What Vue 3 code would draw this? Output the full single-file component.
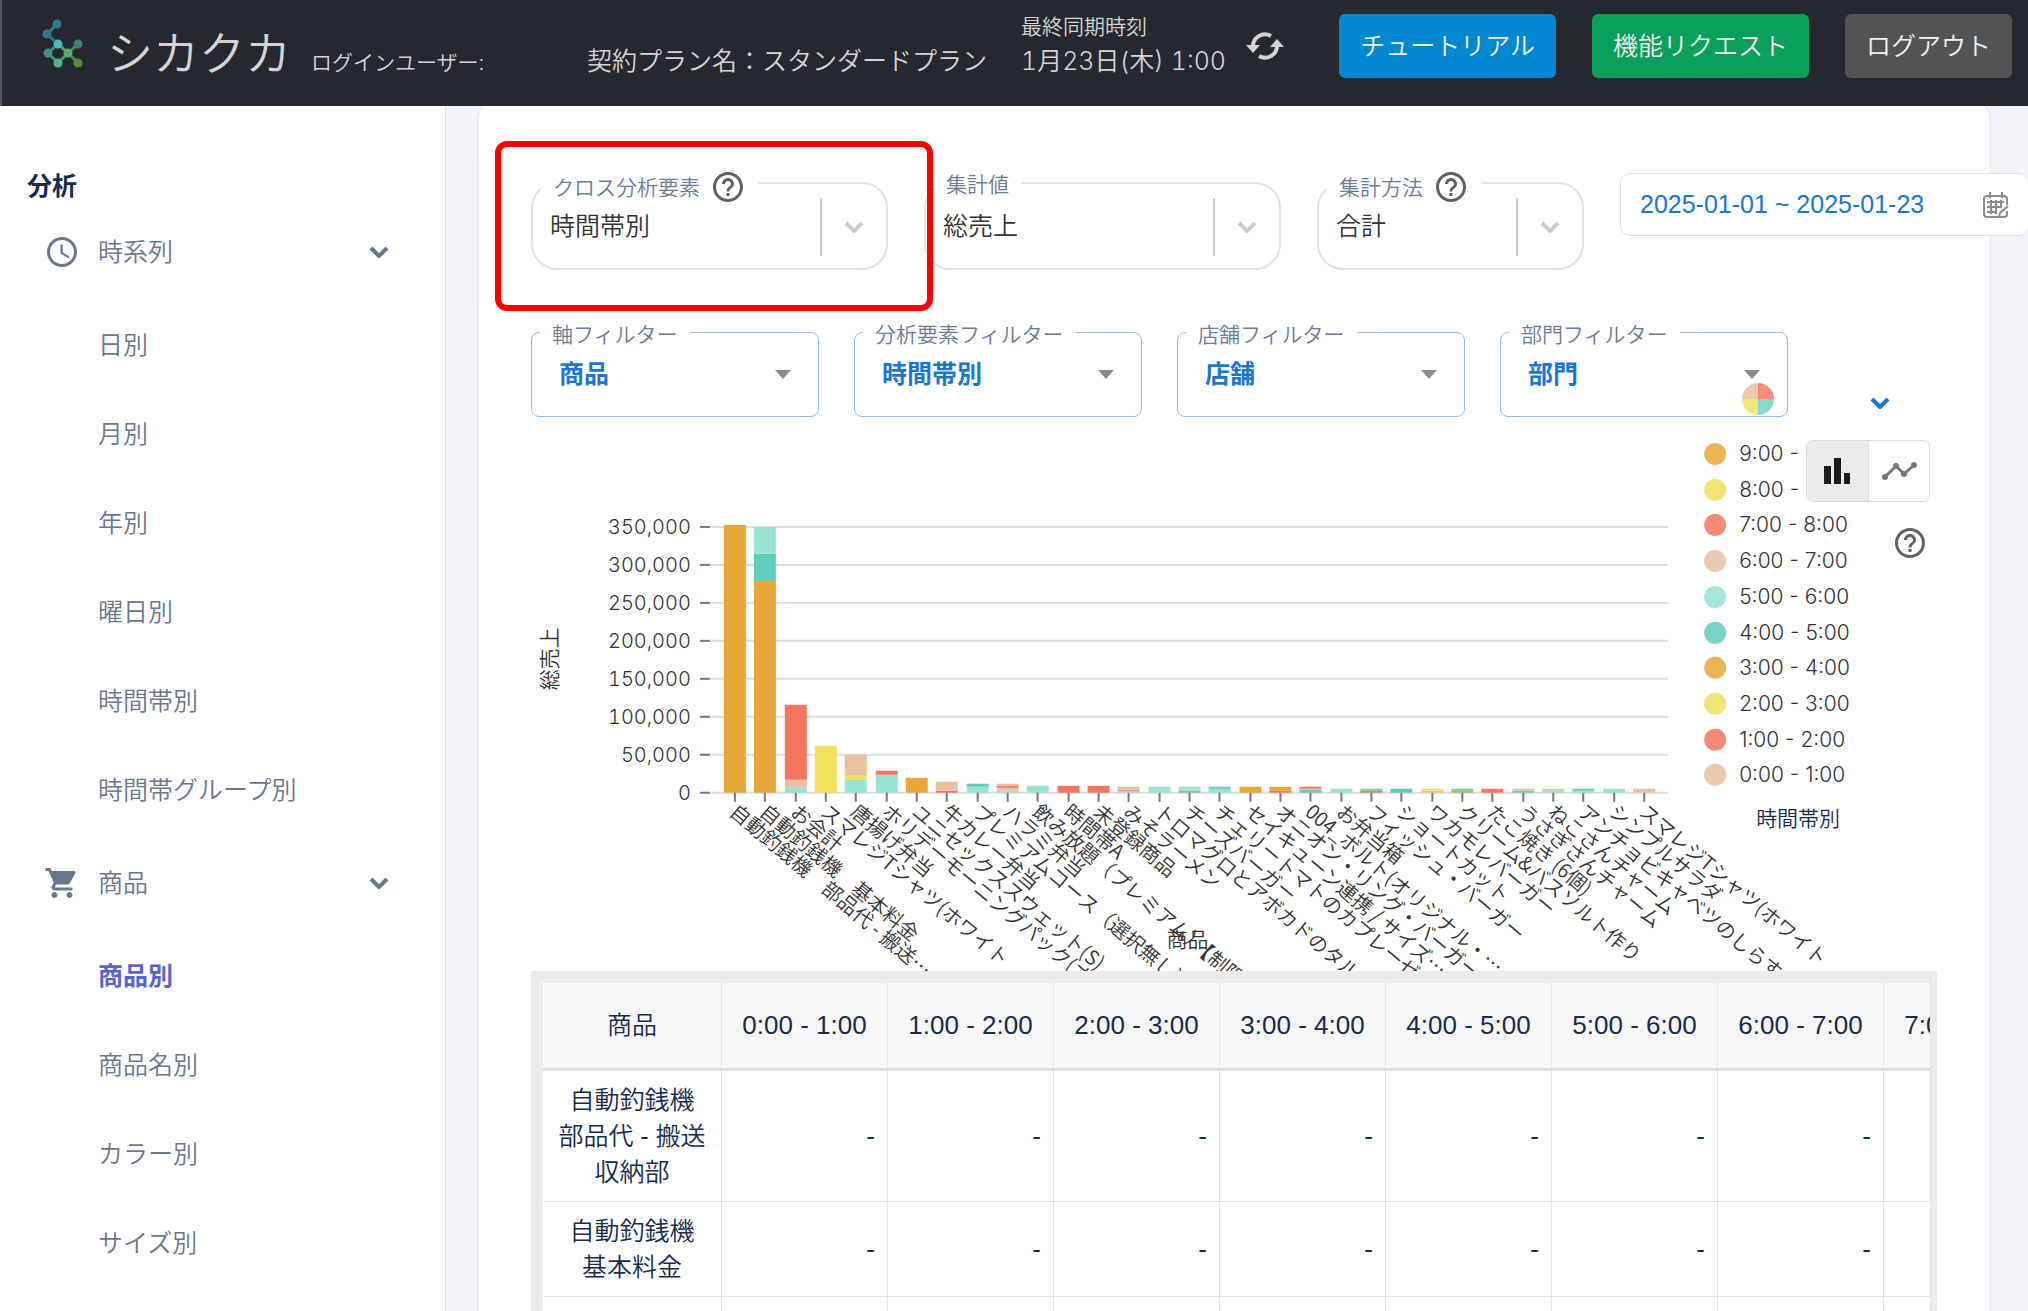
<script setup>
import { ref } from 'vue'

const navGroups = [
  {
    label: '時系列',
    icon: 'clock',
    items: ['日別', '月別', '年別', '曜日別', '時間帯別', '時間帯グループ別'],
  },
  { label: '商品', icon: 'cart', items: ['商品別', '商品名別', 'カラー別', 'サイズ別'] },
]
const activeItem = '商品別'

const selects = [
  { id: 'cross', label: 'クロス分析要素', value: '時間帯別', help: true, size: 'wide' },
  { id: 'metric', label: '集計値', value: '総売上', help: false, size: 'wide' },
  { id: 'method', label: '集計方法', value: '合計', help: true, size: 'narrow' },
]
const filters = [
  { id: 'axis', label: '軸フィルター', value: '商品' },
  { id: 'element', label: '分析要素フィルター', value: '時間帯別' },
  { id: 'store', label: '店舗フィルター', value: '店舗' },
  { id: 'section', label: '部門フィルター', value: '部門' },
]
const period = ref('2025-01-01 ~ 2025-01-23')

const colors = {
  tan: '#e8c1a0',
  red: '#f47560',
  yellow: '#f1e15b',
  orange: '#e8a838',
  teal: '#61cdbb',
  mint: '#97e3d5',
}

const yTicks = [0, 50000, 100000, 150000, 200000, 250000, 300000, 350000].map((v) => ({
  text: v.toLocaleString('en-US'),
  y: Math.round(362 - (v / 50000) * 38),
}))

// Each product: axis label followed by its stacked segments, bottom to top, in chart units.
const products = [
  ['自動釣銭機　部品代 - 搬送…', [['orange', 268]]],
  ['自動釣銭機　基本料金', [['orange', 212], ['teal', 27], ['mint', 27]]],
  ['お会計', [['mint', 5], ['tan', 8], ['red', 75]]],
  ['スマレジTシャツ(ホワイト', [['yellow', 47]]],
  ['唐揚げ弁当', [['mint', 13], ['yellow', 4], ['tan', 21]]],
  ['ホリデーモーニングパック(オ…', [['mint', 18], ['red', 4]]],
  ['ユニセックススウェット(S)', [['orange', 15]]],
  ['牛カレー弁当', [['red', 2], ['tan', 9]]],
  ['プレミアムコース（選択無し）', [['mint', 6], ['teal', 3]]],
  ['ハラミ弁当', [['mint', 2], ['tan', 3], ['red', 2], ['tan', 2]]],
  ['飲み放題（プレミアム）【制限…', [['mint', 7]]],
  ['時間帯A', [['red', 7]]],
  ['未登録商品', [['red', 7]]],
  ['みそラーメン', [['mint', 2], ['red', 1], ['tan', 3]]],
  ['トロマグロとアボカドのタル…', [['mint', 6]]],
  ['チーズバーガー', [['teal', 2], ['tan', 1], ['mint', 3]]],
  ['チェリートマトのカプレーゼ', [['mint', 4], ['teal', 2]]],
  ['セイキューン連携 / サイズ…', [['orange', 6]]],
  ['オニオン・リング・バーガー', [['red', 2], ['orange', 4]]],
  ['004_ボルト(オリジナル・…', [['teal', 3], ['tan', 1], ['red', 2]]],
  ['お弁当箱', [['mint', 4]]],
  ['フィッシュ・バーガー', [['red', 2], ['teal', 2]]],
  ['ショートカット', [['teal', 4]]],
  ['ワカモレバーガー', [['tan', 2], ['yellow', 2]]],
  ['クリーム&バスソルト作り', [['orange', 2], ['teal', 2]]],
  ['たこ焼き (6個)', [['red', 4]]],
  ['うさぎさんチャーム', [['teal', 2], ['tan', 2]]],
  ['ねこさんチャーム', [['mint', 2], ['tan', 2]]],
  ['アンチョビキャベツのしらす', [['mint', 2], ['teal', 2]]],
  ['シンプルサラダ', [['mint', 4]]],
  ['スマレジTシャツ(ホワイト', [['tan', 4]]],
].map(([label, parts], i) => {
  let top = 362
  const segments = parts.map(([color, height]) => {
    top -= height
    return { fill: colors[color], y: top, height }
  })
  return { label, segments, x: Math.round(203 + i * 30.33) }
})

const legend = [
  ['9:00 - 10:00', 'orange'],
  ['8:00 - 9:00', 'yellow'],
  ['7:00 - 8:00', 'red'],
  ['6:00 - 7:00', 'tan'],
  ['5:00 - 6:00', 'mint'],
  ['4:00 - 5:00', 'teal'],
  ['3:00 - 4:00', 'orange'],
  ['2:00 - 3:00', 'yellow'],
  ['1:00 - 2:00', 'red'],
  ['0:00 - 1:00', 'tan'],
].map(([text, color], i) => ({ text, fill: colors[color], y: Math.round(23 + i * 35.7) }))

const hours = Array.from({ length: 10 }, (_, h) => `${h}:00 - ${h + 1}:00`)
const rows = ['自動釣銭機 部品代 - 搬送収納部', '自動釣銭機 基本料金', 'お会計']
</script>

<template>
  <div class="app">
    <header class="topbar">
      <svg class="logo" viewBox="0 0 42 52" aria-hidden="true">
        <g fill="none" stroke-width="3">
          <path d="M15 6 5 16" stroke="#33778a" />
          <path d="M5 16 16 26" stroke="#33778a" />
          <path d="M16 26 6 35 16 45" stroke="#458a85" />
          <path d="M16 26 26 35 16 45" stroke="#4d9c70" />
          <path d="M26 35 36 26" stroke="#45806a" />
          <path d="M26 35 36 45" stroke="#4f8c40" />
        </g>
        <circle cx="15" cy="6" r="4.500" fill="#33778a" />
        <circle cx="5" cy="16" r="4.500" fill="#33778a" />
        <circle cx="16" cy="26" r="4.500" fill="#4fb8b8" />
        <circle cx="36" cy="26" r="4.500" fill="#45806a" />
        <circle cx="6" cy="35" r="4.500" fill="#458a85" />
        <circle cx="26" cy="35" r="4.500" fill="#56ab6a" />
        <circle cx="16" cy="45" r="4.500" fill="#4fb58a" />
        <circle cx="36" cy="45" r="4.500" fill="#4f8c40" />
      </svg>
      <div class="info">
        <span class="brand">シカクカ</span>
        <span class="login">ログインユーザー:</span>
        <span class="plan">契約プラン名：スタンダードプラン</span>
        <span class="sync"><small>最終同期時刻</small><br />1月23日(木) 1:00</span>
      </div>
      <button class="refresh" type="button" aria-label="同期">
        <svg viewBox="0 0 38 32">
          <g fill="none" stroke="#d4d4d4" stroke-width="4">
            <path d="M7 17A12 12 0 0 1 25 6" />
            <path d="M31 15A12 12 0 0 1 13 26" />
          </g>
          <path d="M0 15h14l-7 8zM24 17h14l-7-8z" fill="#d4d4d4" />
        </svg>
      </button>
      <div class="actions">
        <button type="button" class="btn blue">チュートリアル</button>
        <button type="button" class="btn green">機能リクエスト</button>
        <button type="button" class="btn gray">ログアウト</button>
      </div>
    </header>

    <div class="body">
      <nav class="sidebar">
        <h2>分析</h2>
        <section v-for="group in navGroups" :key="group.label">
          <button type="button" class="group">
            <svg v-if="group.icon === 'clock'" class="group-icon" viewBox="0 0 24 24">
              <path
                fill="currentColor"
                d="M11.990 2C6.470 2 2 6.480 2 12s4.470 10 9.990 10C17.520 22 22 17.520 22 12S17.520 2 11.990 2zM12 20c-4.420 0-8-3.580-8-8s3.580-8 8-8 8 3.580 8 8-3.580 8-8 8zm.5-13H11v6l5.250 3.150.75-1.230-4.500-2.670z"
              />
            </svg>
            <svg v-else class="group-icon" viewBox="0 0 24 24">
              <path
                fill="currentColor"
                d="M7 18c-1.100 0-1.990.9-1.990 2S5.900 22 7 22s2-.9 2-2-.9-2-2-2zM1 2v2h2l3.600 7.590-1.350 2.450c-.16.28-.25.61-.25.96 0 1.100.9 2 2 2h12v-2H7.420c-.14 0-.25-.11-.25-.25l.03-.12.9-1.630h7.450c.75 0 1.410-.41 1.750-1.030L20.880 5.480c.08-.14.12-.31.12-.48 0-.55-.45-1-1-1H5.210l-.94-2H1zm16 16c-1.100 0-1.990.9-1.990 2s.89 2 1.990 2 2-.9 2-2-.9-2-2-2z"
              />
              <path fill="currentColor" d="M6 5h13l-3 7H8z" />
            </svg>
            <span>{{ group.label }}</span>
            <svg class="chevron" viewBox="0 0 20 12"><path d="M2 2l8 8 8-8" /></svg>
          </button>
          <ul>
            <li v-for="item in group.items" :key="item">
              <a href="#" :class="{ active: item === activeItem }">{{ item }}</a>
            </li>
          </ul>
        </section>
      </nav>

      <main>
        <div class="card">
          <div class="controls">
            <fieldset
              v-for="s in selects"
              :key="s.id"
              class="field"
              :class="[s.size, { marked: s.id === 'cross' }]"
            >
              <legend :class="{ plain: !s.help }">
                <label :for="s.id">{{ s.label }}</label>
                <svg v-if="s.help" class="help" viewBox="0 0 24 24">
                  <path
                    fill="currentColor"
                    d="M11 18h2v-2h-2v2zm1-16C6.480 2 2 6.480 2 12s4.480 10 10 10 10-4.480 10-10S17.520 2 12 2zm0 18c-4.410 0-8-3.590-8-8s3.590-8 8-8 8 3.590 8 8-3.590 8-8 8zm0-14c-2.210 0-4 1.790-4 4h2c0-1.100.9-2 2-2s2 .9 2 2c0 2-3 1.750-3 5h2c0-2.250 3-2.500 3-5 0-2.210-1.790-4-4-4z"
                  />
                </svg>
              </legend>
              <div class="field-body">
                <select :id="s.id">
                  <option>{{ s.value }}</option>
                </select>
                <i class="divider"></i>
                <svg class="chevron" viewBox="0 0 20 12"><path d="M2 2l8 8 8-8" /></svg>
              </div>
            </fieldset>
            <div class="period">
              <input v-model="period" type="text" aria-label="期間" />
              <svg viewBox="0 0 26 26" fill="none" stroke="#8c8c8c" stroke-width="2">
                <path d="M24 13V7a3 3 0 0 0-3-3H4a3 3 0 0 0-3 3v15a3 3 0 0 0 3 3h17a3 3 0 0 0 3-3v-3" />
                <path d="M7 0v6M19 0v6M4 10h17M4 15h15M4 20h10M8 8v14M13 8v14M18 8v8" />
                <path d="M25 14l-8 7-1 4" />
              </svg>
            </div>
          </div>

          <div class="filters">
            <fieldset v-for="f in filters" :key="f.id" class="filter">
              <legend>
                <label :for="f.id">{{ f.label }}</label>
              </legend>
              <div class="filter-body">
                <select :id="f.id">
                  <option>{{ f.value }}</option>
                </select>
                <svg viewBox="0 0 16 9"><path d="M0 0h16L8 9z" fill="#8c8c8c" /></svg>
              </div>
            </fieldset>
            <button type="button" class="more" aria-label="フィルターを開く">
              <svg class="chevron" viewBox="0 0 20 12"><path d="M2 2l8 8 8-8" /></svg>
            </button>
          </div>

          <div class="chart">
            <svg class="plot" viewBox="-1 0 1407 540">
              <g v-for="t in yTicks" :key="t.text" class="tick">
                <path :d="`M178 ${t.y}H1137`" stroke="#dddddd" stroke-width="2" />
                <path :d="`M168 ${t.y}h10`" stroke="#777777" stroke-width="2" />
                <text x="159" :y="t.y + 7" text-anchor="end">{{ t.text }}</text>
              </g>
              <text class="axis-title" transform="translate(17 228) rotate(-90)" y="8" text-anchor="middle">総売上</text>
              <g v-for="(p, i) in products" :key="i" class="product">
                <rect
                  v-for="(s, j) in p.segments"
                  :key="j"
                  :x="p.x - 11"
                  :y="s.y"
                  width="22"
                  :height="s.height"
                  :fill="s.fill"
                />
                <path :d="`M${p.x} 362v9`" stroke="#777777" stroke-width="2" />
                <text :transform="`translate(${p.x - 2} 378) rotate(40)`" y="7">{{ p.label }}</text>
              </g>
              <text class="axis-title" x="656" y="516" text-anchor="middle">商品</text>
              <g v-for="l in legend" :key="l.text" class="legend-item">
                <circle cx="1184" :cy="l.y" r="11" :fill="l.fill" fill-opacity="0.850" />
                <text x="1208" :y="l.y + 7">{{ l.text }}</text>
              </g>
              <text class="legend-title" x="1267" y="395" text-anchor="middle">時間帯別</text>
            </svg>
            <svg class="palette" viewBox="0 0 32 32">
              <path d="M16 16V0a16 16 0 0 0-16 16z" fill="#edcbb0" />
              <path d="M16 16h16A16 16 0 0 0 16 0z" fill="#f88b79" />
              <path d="M16 16v16a16 16 0 0 0 16-16z" fill="#86dacb" />
              <path d="M16 16H0a16 16 0 0 0 16 16z" fill="#f3e777" />
            </svg>
            <div class="toggle">
              <button type="button" class="on" aria-label="棒グラフ">
                <svg viewBox="0 0 26 26"><path d="M0 8h7v18H0zM10 0h7v26h-7zM20 15h6v11h-6z" fill="#1c1c1c" /></svg>
              </button>
              <button type="button" aria-label="折れ線グラフ">
                <svg class="line" viewBox="0 0 36 20" fill="#777777">
                  <path d="M4 16 15 5l8 8L33 4" fill="none" stroke="#777777" stroke-width="3" />
                  <circle cx="4" cy="16" r="3" />
                  <circle cx="15" cy="5" r="3" />
                  <circle cx="23" cy="13" r="3" />
                  <circle cx="33" cy="4" r="3" />
                </svg>
              </button>
            </div>
            <svg class="help chart-help" viewBox="0 0 24 24">
              <path
                fill="currentColor"
                d="M11 18h2v-2h-2v2zm1-16C6.480 2 2 6.480 2 12s4.480 10 10 10 10-4.480 10-10S17.520 2 12 2zm0 18c-4.410 0-8-3.590-8-8s3.590-8 8-8 8 3.590 8 8-3.590 8-8 8zm0-14c-2.210 0-4 1.790-4 4h2c0-1.100.9-2 2-2s2 .9 2 2c0 2-3 1.750-3 5h2c0-2.250 3-2.500 3-5 0-2.210-1.790-4-4-4z"
              />
            </svg>
          </div>

          <div class="table-frame">
            <div class="table-scroll">
              <table>
                <thead>
                  <tr>
                    <th class="name">商品</th>
                    <th v-for="h in hours" :key="h">{{ h }}</th>
                  </tr>
                </thead>
                <tbody>
                  <tr v-for="r in rows" :key="r">
                    <th class="name" scope="row">{{ r }}</th>
                    <td v-for="h in hours" :key="h">-</td>
                  </tr>
                </tbody>
              </table>
            </div>
          </div>
        </div>
      </main>
    </div>
  </div>
</template>

<style>
body {
  margin: 0;
  overflow: hidden;
}
</style>

<style scoped>
.app {
  display: flex;
  flex-direction: column;
  height: 100vh;
  overflow: hidden;
  background: #f3f4f7;
  color: #172b4d;
  font-family: Inter, 'Noto Sans CJK JP', sans-serif;
  font-size: 25px;
  font-weight: 350;
}
button,
select,
input {
  font: inherit;
  color: inherit;
  background: none;
  border: 0;
  padding: 0;
  margin: 0;
}
.chevron {
  width: 20px;
  height: 12px;
  fill: none;
  stroke: currentColor;
  stroke-width: 4;
}

.topbar {
  flex: none;
  display: flex;
  align-items: flex-start;
  box-sizing: border-box;
  height: 106px;
  padding: 0 16px 0 40px;
  border-left: 2px solid #54565c;
  background: #25282f;
  color: #d4d4d4;
  white-space: nowrap;
}
.logo {
  width: 42px;
  height: 52px;
  margin-top: 18px;
}
.info {
  display: flex;
  align-items: last baseline;
  margin: 8px 0 0 23px;
  line-height: 34px;
}
.brand {
  width: 204px;
  font-size: 46px;
}
.login {
  width: 276px;
  font-size: 21px;
}
.plan {
  width: 434px;
}
.sync {
  min-width: 204px;
  font-variant-numeric: tabular-nums;
}
.sync small {
  font-size: 21px;
}
.refresh {
  margin: 30px 0 0 20px;
}
.refresh svg {
  display: block;
  width: 38px;
  height: 32px;
}
.actions {
  display: flex;
  gap: 36px;
  margin: 14px 0 0 auto;
}
.btn {
  height: 64px;
  padding: 0 21px 4px;
  border-radius: 6px;
  color: #f2f2f2;
}
.blue {
  background: #0288d1;
}
.green {
  background: #0a9f5a;
}
.gray {
  background: #535353;
}

.body {
  flex: 1;
  display: flex;
  min-height: 0;
}
.sidebar {
  flex: none;
  box-sizing: border-box;
  width: 446px;
  border-right: 1px solid #dfe1e6;
  background: #fff;
  color: #6b778c;
  overflow: hidden;
}
.sidebar h2 {
  margin: 62px 0 0 27px;
  font-size: 25px;
  line-height: 36px;
  font-weight: 700;
  color: #172b4d;
}
.group {
  display: flex;
  align-items: center;
  gap: 18px;
  width: 100%;
  height: 96px;
  padding: 0 56px 0 44px;
  text-align: left;
}
.group span {
  padding-bottom: 4px;
}
.group-icon {
  width: 36px;
  height: 36px;
}
.group .chevron {
  margin-left: auto;
}
ul {
  margin: 0;
  padding: 1px 0 0;
  list-style: none;
}
li a {
  display: block;
  padding-left: 98px;
  line-height: 89px;
  color: inherit;
  text-decoration: none;
}
li a.active {
  color: #5664d2;
  font-weight: 700;
}

main {
  flex: 1;
  min-width: 0;
  padding: 0 37px 0 31px;
  overflow: hidden;
}
.card {
  margin-top: -9px;
  padding: 65px 53px 0;
  border: 1px solid #e3e5e8;
  border-radius: 24px;
  background: #fff;
}
fieldset {
  position: relative;
  flex: none;
  box-sizing: border-box;
  min-width: 0;
  margin: 0;
  padding: 0;
}
legend {
  display: flex;
  align-items: center;
  box-sizing: border-box;
  margin-left: 8px;
  padding: 8px 12px 0;
  height: 40px;
  font-size: 21px;
  color: #6b7a99;
}
legend label {
  padding-bottom: 3px;
}
legend.plain {
  padding-top: 2px;
}
.help {
  width: 36px;
  height: 36px;
  color: #616161;
}
legend .help {
  margin-left: 10px;
}
.controls {
  display: flex;
  align-items: flex-start;
  gap: 36px;
}
.field {
  border: 2px solid #e2e2e2;
  border-radius: 26px;
}
.wide {
  width: 357px;
}
.narrow {
  width: 267px;
}
.marked::after {
  content: '';
  position: absolute;
  z-index: 1;
  inset: -62px -47px -43px -38px;
  border: 6px solid #f00;
  border-radius: 12px;
  pointer-events: none;
}
.field-body {
  display: flex;
  align-items: center;
  box-sizing: border-box;
  height: 84px;
  margin-top: -19px;
  padding: 2px 22px 0 17px;
  color: #ccc;
}
select {
  flex: 1;
  min-width: 0;
  padding-bottom: 3px;
  appearance: none;
  outline: 0;
}
.field-body select {
  color: #333;
}
.divider {
  width: 2px;
  height: 58px;
  margin-right: 22px;
  background: #ccc;
}
.period {
  flex: none;
  display: flex;
  align-items: center;
  box-sizing: border-box;
  width: 409px;
  height: 63px;
  margin-top: 10px;
  padding: 0 19px;
  border: 1px solid #e0e0e0;
  border-radius: 10px;
  background: #fff;
}
.period input {
  flex: 1;
  min-width: 0;
  font-family: 'Liberation Sans', sans-serif;
  color: #1976d2;
}
.period svg {
  width: 26px;
  height: 26px;
}

.filters {
  display: flex;
  align-items: flex-end;
  gap: 35px;
  margin-top: 46px;
}
.filter {
  width: 288px;
  border: 1px solid #90bcef;
  border-radius: 8px;
}
.filter legend {
  height: 32px;
  padding-top: 4px;
}
.filter-body {
  display: flex;
  align-items: center;
  height: 83px;
  margin-top: -15px;
  padding: 0 27px;
  color: #1976d2;
}
.filter-body select {
  padding-bottom: 2px;
  font-weight: 700;
}
.filter-body svg {
  width: 16px;
  height: 9px;
}
.more {
  display: flex;
  align-items: center;
  justify-content: center;
  width: 28px;
  height: 28px;
  margin-left: 43px;
  color: #1976d2;
}

.chart {
  position: relative;
  margin-top: 14px;
}
.plot {
  display: block;
  width: 100%;
  font-size: 20px;
  fill: #333;
}
.tick {
  font-weight: 300;
  font-variant-numeric: tabular-nums;
}
.legend-item {
  font-size: 21px;
  font-weight: 300;
}
.product {
  font-family: 'Noto Sans CJK JP', sans-serif;
}
.axis-title {
  font-size: 21px;
}
.legend-title {
  font-size: 21px;
  fill: #172b4d;
}
.palette {
  position: absolute;
  top: -48px;
  right: 163px;
  width: 32px;
  height: 32px;
}
.toggle {
  position: absolute;
  top: 9px;
  right: 7px;
  display: flex;
  box-sizing: border-box;
  width: 124px;
  height: 62px;
  border: 1px solid #dcdcdc;
  border-radius: 6px;
  background: #fff;
  overflow: hidden;
}
.toggle button {
  flex: 1;
  display: flex;
  align-items: center;
  justify-content: center;
}
.toggle .on {
  background: #ebebeb;
  border-right: 1px solid #dcdcdc;
}
.toggle svg {
  width: 26px;
  height: 26px;
}
.toggle .line {
  width: 36px;
  height: 20px;
}
.chart-help {
  position: absolute;
  top: 94px;
  right: 9px;
}

.table-frame {
  position: relative;
  padding: 6px;
  background: #ececec;
}
.table-scroll {
  overflow: hidden;
  border: 1px solid #e2e2e2;
  border-bottom: 0;
}
table {
  table-layout: fixed;
  width: 1840px;
  border: solid #ececec;
  border-width: 5px 0 0 5px;
  border-spacing: 0;
  background: #fff;
}
th,
td {
  box-sizing: border-box;
  width: 166px;
  padding: 11px 12px;
  border-right: 1px solid #e4e4e4;
  border-bottom: 1px solid #e4e4e4;
  font-family: 'Liberation Sans', 'Noto Sans CJK JP', sans-serif;
  font-size: 26px;
  font-weight: 400;
  line-height: 36px;
  text-align: right;
}
th.name {
  width: 179px;
  font-size: 25px;
  font-weight: 350;
  text-align: center;
}
thead th {
  height: 88px;
  padding: 0;
  border-bottom: 3px solid #e0e0e0;
  background: #f7f7f7;
  text-align: center;
}
</style>
